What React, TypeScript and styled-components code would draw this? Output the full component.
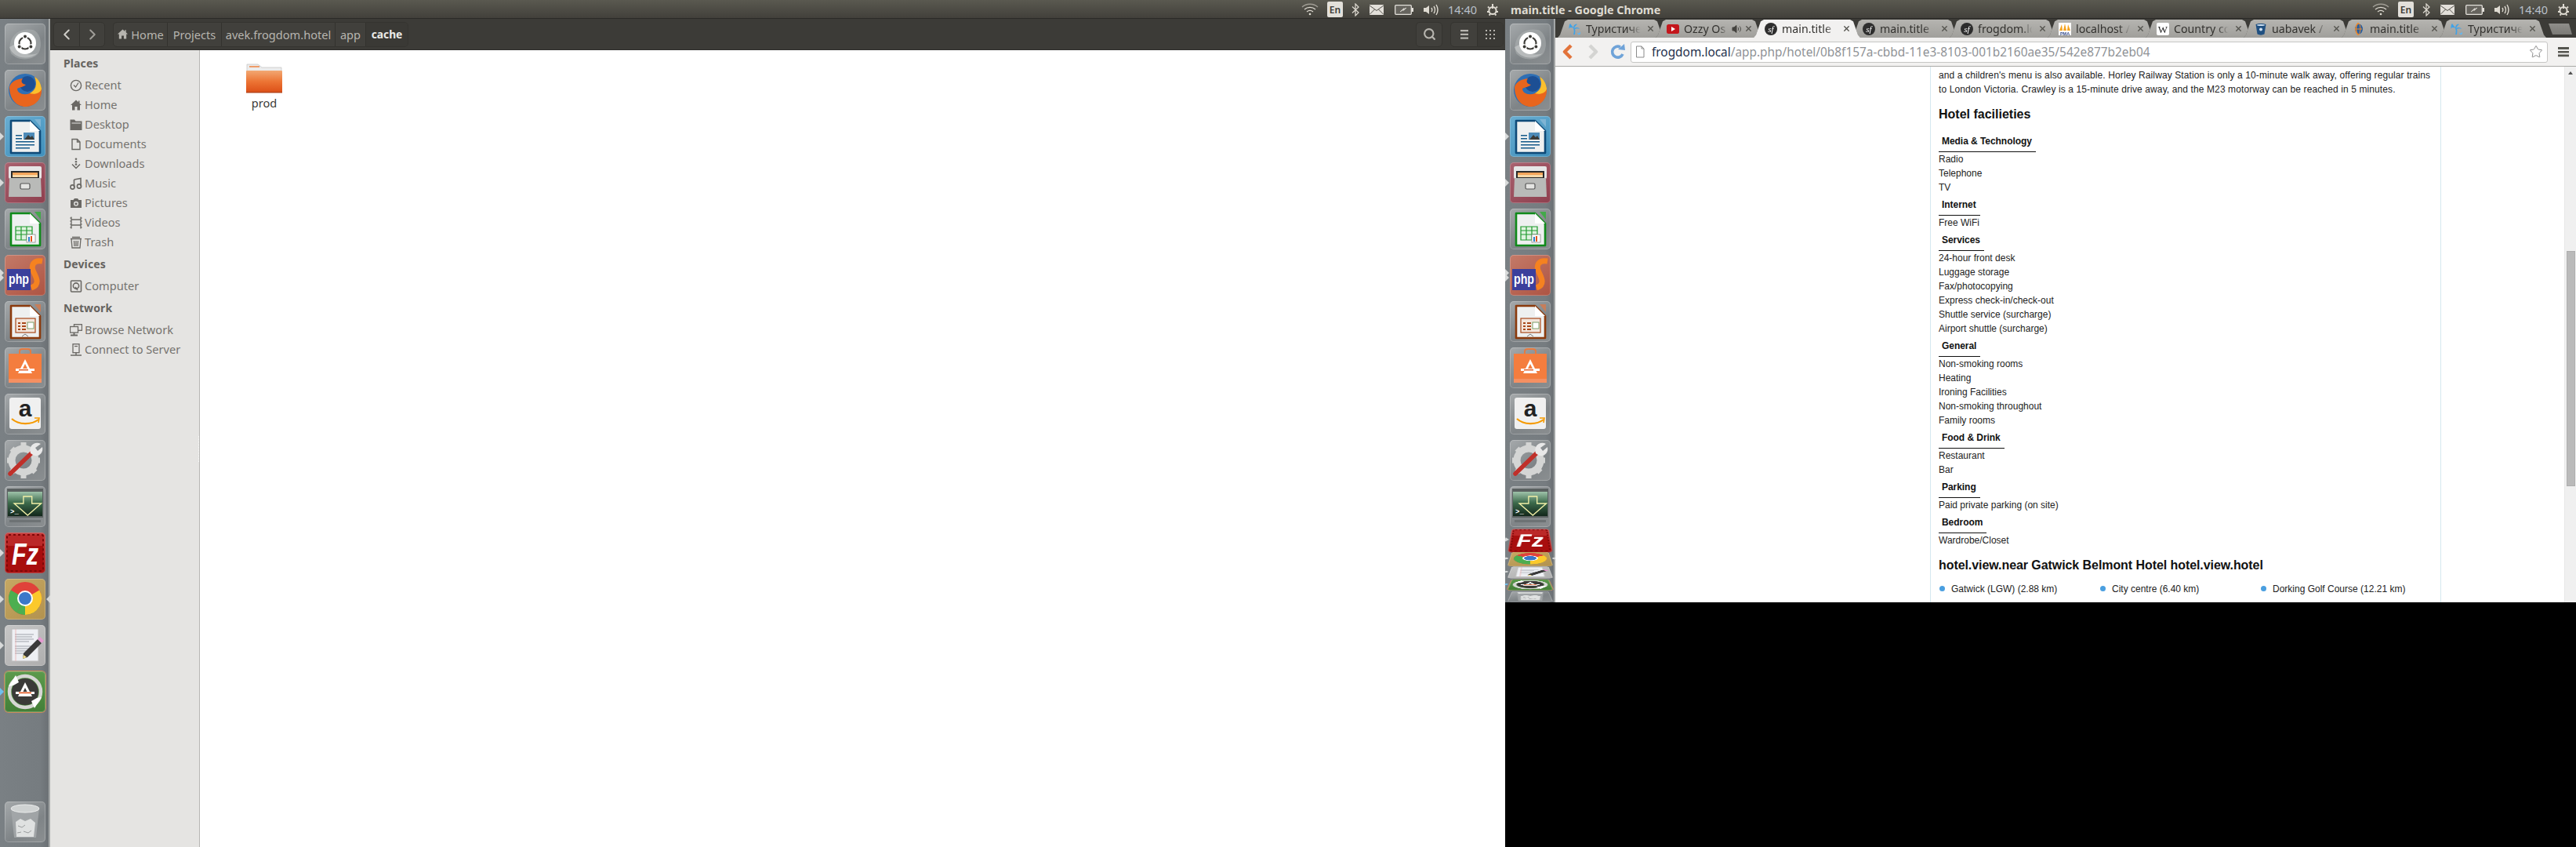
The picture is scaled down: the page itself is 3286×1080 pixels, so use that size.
import React from 'react'
import styled, { createGlobalStyle } from 'styled-components'
import { ChevronLeft, ChevronRight, Search, Star, X } from 'lucide-react'

const GlobalStyle = createGlobalStyle`
  html, body { margin: 0; padding: 0; background: #000; }
  body { width: 3286px; height: 1080px; overflow: hidden; font-family: "Noto Sans", "Open Sans", sans-serif; }
  * { box-sizing: border-box; }
`

const Desktop = styled.div`
  display: flex;
  width: 3286px;
  height: 1080px;
  background: #000;
`
const Screen = styled.div<{ $w: number; $h: number }>`
  display: flex;
  flex-direction: column;
  flex: none;
  width: ${p => p.$w}px;
  height: ${p => p.$h}px;
`
const Panel = styled.div`
  display: flex;
  align-items: center;
  flex: none;
  height: 24px;
  background: linear-gradient(#5a5950, #413f3a);
  box-shadow: inset 0 -1px 0 #2b2a27;
`
const WindowTitle = styled.div`
  margin-left: 7px;
  color: #dfdbd2;
  font-size: 14.3px;
  font-weight: 700;
  white-space: nowrap;
`
const IndicatorRow = styled.div`
  display: flex;
  align-items: center;
  margin-left: auto;
  padding-right: 2px;
  height: 24px;
`
const Indicator = styled.div<{ $w: number }>`
  display: flex;
  align-items: center;
  justify-content: center;
  width: ${p => p.$w}px;
  height: 24px;
  color: #dfdbd2;
`
const LangBox = styled.div`
  display: flex;
  align-items: center;
  justify-content: center;
  width: 20px;
  height: 20px;
  border-radius: 2px;
  background: #e3e0da;
  color: #3c3b37;
  font-size: 12px;
  font-weight: 600;
`
const Clock = styled.span`
  color: #b9c0c9;
  font-size: 14.5px;
`
const Body = styled.div`
  display: flex;
  flex: 1;
  min-height: 0;
`

/* launcher */
const Launcher = styled.div`
  display: flex;
  flex-direction: column;
  flex: none;
  width: 64px;
  padding: 6px 0;
  background: linear-gradient(90deg, #7a8084 0%, #767c80 80%, #6c7175 96%, #a3a6a6 97%, #a3a6a6 100%);
`
const TileList = styled.div`
  display: flex;
  flex-direction: column;
  gap: 7px;
  padding-left: 6px;
`
const FoldList = styled.div`
  display: flex;
  flex-direction: column;
  margin-top: 1px;
  padding-left: 6px;
`
const Fold = styled.div<{ $h: number; $deg: number }>`
  display: flex;
  align-items: center;
  height: ${p => p.$h}px;
  & > div {
    flex: none;
    transform: perspective(220px) rotateX(${p => p.$deg}deg);
  }
`
const BottomTile = styled.div`
  margin-top: auto;
  padding-left: 6px;
`
const Tile = styled.div<{ $bg?: string; $glow?: boolean }>`
  position: relative;
  width: 52px;
  height: 52px;
  border-radius: 5px;
  background: ${p => p.$bg || 'linear-gradient(145deg, #a5a9ab, #7f8487 60%, #8b8f91)'};
  box-shadow: inset 0 0 0 1px rgba(255, 255, 255, 0.22)${p => (p.$glow ? ', 0 0 0 1px #c98a5c' : '')};
  svg { display: block; }
`
const Pip = styled.span<{ $c: string; $y?: number }>`
  position: absolute;
  left: -6px;
  top: ${p => 21 + (p.$y || 0)}px;
  width: 0;
  height: 0;
  border-top: 5px solid transparent;
  border-bottom: 5px solid transparent;
  border-left: 5px solid ${p => p.$c};
`
const PipRight = styled.span`
  position: absolute;
  right: -6px;
  top: 21px;
  width: 0;
  height: 0;
  border-top: 5px solid transparent;
  border-bottom: 5px solid transparent;
  border-right: 5px solid #d4d6d6;
`

const AppIcon: React.FC<{ name: string }> = ({ name }) => {
  let art: React.ReactNode = null
  if (name === 'dash') {
    art = (
      <>
        <path d="M8 38 C2 20 16 4 36 8 C46 12 48 26 44 36 C40 46 18 50 8 38Z" fill="#b6babb" opacity=".45" />
        <path d="M6 30 C10 44 30 48 42 38 C30 42 18 38 14 26Z" fill="#d6d8d8" opacity=".5" />
        <circle cx="26" cy="25" r="14" fill="#fff" />
        <circle cx="26" cy="25" r="7.5" fill="none" stroke="#3c3b37" strokeWidth="2.2" />
        <circle cx="26" cy="16.5" r="2.6" fill="#3c3b37" stroke="#fff" strokeWidth="1.2" />
        <circle cx="18.6" cy="29.5" r="2.6" fill="#3c3b37" stroke="#fff" strokeWidth="1.2" />
        <circle cx="33.4" cy="29.5" r="2.6" fill="#3c3b37" stroke="#fff" strokeWidth="1.2" />
      </>
    )
  } else if (name === 'firefox') {
    art = (
      <>
        <circle cx="26" cy="26" r="21" fill="#2f6fb4" />
        <circle cx="29" cy="18" r="10" fill="#1d4f94" />
        <path d="M6 22 C6 38 16 48 28 47 C40 46 48 36 47 24 C45 16 41 11 38 9 C42 18 40 26 32 30 C24 33 16 30 16 24 C20 22 24 22 27 19 C22 18 20 15 23 11 C15 12 8 15 6 22Z" fill="#e8651d" />
        <path d="M38 9 C42 18 40 26 32 30 C38 32 46 30 47 24 C46 16 42 11 38 9Z" fill="#fbc02d" />
      </>
    )
  } else if (name === 'writer' || name === 'calc' || name === 'impress') {
    const c = name === 'writer' ? '#0f4a78' : name === 'calc' ? '#0f8a1a' : '#8b3a0c'
    const corner = name === 'writer' ? '#7fb4d4' : name === 'calc' ? '#43a94a' : '#c77e5a'
    art = (
      <>
        <path d="M38 4 H46 V14Z" fill={corner} />
        <path d="M8 6 H32 L45 19 V47 H8Z" fill="#eef0f0" stroke={c} strokeWidth="2.6" strokeLinejoin="round" />
        <path d="M32 6 L45 19 H32Z" fill="#fff" />
        {name === 'writer' && (
          <>
            <path d="M14 24h8v1.6h-8zM14 28h8v1.6h-8zM14 32h24v1.6H14zM14 36h24v1.6H14zM14 40h18v1.6H14z" fill="#155a8a" />
            <rect x="24" y="21" width="14" height="9" fill="#4d8bb8" />
            <path d="M25 30 l5-6 3 3 2-2 3 5z" fill="#3c3b37" />
          </>
        )}
        {name === 'calc' && (
          <>
            <path d="M14 23h21v17H14z" fill="#dff2df" stroke="#1f9a2c" strokeWidth="1.2" />
            <path d="M14 28h21M14 33h21M21 23v17M28 23v17" stroke="#1f9a2c" strokeWidth="1.2" />
            <rect x="28" y="33" width="11" height="10" fill="#fff" stroke="#888" strokeWidth=".8" />
            <path d="M30 36h2v6h-2z" fill="#2f7fc8" />
            <path d="M33 35h2v7h-2z" fill="#e2541c" />
          </>
        )}
        {name === 'impress' && (
          <>
            <rect x="14" y="22" width="25" height="18" fill="#f3e6dc" stroke="#a8481a" strokeWidth="1.2" />
            <path d="M17 27h3v2h-3zM17 31h3v2h-3zM17 35h3v2h-3zM22 27h5v2h-5zM22 31h5v2h-5zM22 35h5v2h-5z" fill="#a8481a" />
            <rect x="29" y="27" width="8" height="8" fill="#fff" stroke="#5c8a4a" strokeWidth=".8" />
            <path d="M22 45 l4-3 4 3" fill="none" stroke="#777" strokeWidth="1" />
          </>
        )}
      </>
    )
  } else if (name === 'files') {
    art = (
      <>
        <rect x="5" y="5" width="42" height="16" rx="2" fill="#e6e6e6" />
        <rect x="8" y="11" width="36" height="12" fill="#2a2a2a" />
        <rect x="10" y="13" width="32" height="3" fill="#f5a55a" />
        <rect x="10" y="16" width="32" height="3" fill="#f8d8a8" />
        <path d="M6 20 H46 L47 44 H5Z" fill="#b9bab8" />
        <rect x="20" y="27" width="12" height="7" rx="1.5" fill="#e4e4e2" stroke="#555" strokeWidth="1.2" />
      </>
    )
  } else if (name === 'php') {
    art = (
      <>
        <path d="M48 8 C36 6 33 14 37 22 C41 30 45 38 34 42" fill="none" stroke="#f58220" strokeWidth="7" />
        <rect x="3" y="18" width="30" height="27" fill="#3b3f9c" />
        <text x="5" y="37" fontFamily="Liberation Sans, sans-serif" fontWeight="700" fontSize="19" fill="#fff" textLength="26" lengthAdjust="spacingAndGlyphs">php</text>
      </>
    )
  } else if (name === 'software') {
    art = (
      <>
        <path d="M19 10 V5 Q19 2 23 2 H29 Q33 2 33 5 V10" fill="none" stroke="#e67a3f" strokeWidth="2" />
        <rect x="5" y="8" width="42" height="37" fill="#f47d3e" />
        <rect x="5" y="40" width="42" height="5" fill="#f59062" />
        <path d="M26 15 L35 33 H17Z" fill="#fff" />
        <path d="M26 21 L30 29 H22Z" fill="#f47d3e" />
        <rect x="14" y="27" width="24" height="3" fill="#fff" />
        <rect x="18" y="28" width="12" height="1.4" fill="#e2541c" />
      </>
    )
  } else if (name === 'amazon') {
    art = (
      <>
        <rect x="6" y="5" width="40" height="40" rx="3" fill="#f0f0f0" />
        <text x="26" y="29" textAnchor="middle" fontFamily="Liberation Sans, sans-serif" fontWeight="700" fontSize="30" fill="#222">a</text>
        <path d="M9 32 C18 40 34 40 43 33" fill="none" stroke="#f59a00" strokeWidth="2.2" />
        <path d="M38 31 L44 31 L43 37" fill="none" stroke="#f59a00" strokeWidth="1.6" />
      </>
    )
  } else if (name === 'settings') {
    art = (
      <>
        <circle cx="24" cy="26" r="15" fill="none" stroke="#d4d5d4" strokeWidth="9" />
        <path d="M24 3v8M24 41v8M3 26h8M37 26h8M9 11l6 6M33 35l6 6M39 11l-6 6M15 35l-6 6" stroke="#d4d5d4" strokeWidth="7" />
        <path d="M7 43 L36 15" stroke="#c0302a" strokeWidth="5.5" strokeLinecap="round" />
        <path d="M33 17 C30 8 38 1 46 5 L39 10 L42 14 L48 9 C50 17 42 23 36 19Z" fill="#e8e8e8" />
      </>
    )
  } else if (name === 'terminal') {
    art = (
      <>
        <rect x="3" y="3" width="46" height="37" fill="#5a6060" />
        <rect x="4" y="7" width="44" height="31" fill="url(#termGrad)" />
        <linearGradient id="termGrad" x1="0" y1="0" x2="0" y2="1">
          <stop offset="0" stopColor="#9fc3aa" />
          <stop offset=".45" stopColor="#3d6b4c" />
          <stop offset="1" stopColor="#12261a" />
        </linearGradient>
        <path d="M21 13 H33 V22 H46 L27 37 L8 22 H21Z" transform="translate(5 0) scale(.9 1)" fill="none" stroke="#f2f0a8" strokeWidth="1.5" />
        <text x="7" y="35" fontFamily="Liberation Mono, monospace" fontWeight="700" fontSize="9" fill="#fff">&gt;_</text>
        <rect x="6" y="43" width="40" height="3" fill="#6d7274" />
      </>
    )
  } else if (name === 'filezilla') {
    art = (
      <>
        <rect x="3" y="3" width="46" height="46" rx="2" fill="#a80e0e" />
        <rect x="3" y="3" width="46" height="14" fill="#c83a3a" opacity=".6" />
        <rect x="3" y="3" width="46" height="46" rx="2" fill="none" stroke="#7e0808" strokeWidth="2" strokeDasharray="3 3" />
        <text x="26" y="41" textAnchor="middle" fontFamily="Liberation Sans, sans-serif" fontStyle="italic" fontWeight="700" fontSize="38" fill="#fff" textLength="34" lengthAdjust="spacingAndGlyphs">Fz</text>
      </>
    )
  } else if (name === 'chrome') {
    art = (
      <>
        <circle cx="26" cy="25" r="21" fill="#e0423a" />
        <path d="M26 25 L44.2 35.5 A21 21 0 0 1 15.5 43.2 Z" fill="#4caf50" />
        <path d="M26 25 L15.5 43.2 A21 21 0 0 1 7.8 14.5 Z" fill="#4caf50" />
        <path d="M26 25 L26 46 A21 21 0 0 0 44.2 14.5 Z" fill="#fbc92b" />
        <circle cx="26" cy="25" r="10" fill="#fff" />
        <circle cx="26" cy="25" r="8" fill="#3b78c9" />
      </>
    )
  } else if (name === 'editor') {
    art = (
      <>
        <rect x="9" y="5" width="34" height="41" fill="#eef0f4" stroke="#bdbdbd" />
        <path d="M13 12h24M13 15h22M13 18h24M13 21h18M13 27h24M13 30h20M13 33h18M13 36h12" stroke="#9fa3ab" strokeWidth="1" />
        <path d="M14 5v41" stroke="#eab0b0" strokeWidth=".8" />
        <path d="M24 36 L42 18 L47 23 L29 41 L23 43Z" fill="#3a3a3a" />
        <path d="M42 18 L45 15 L50 20 L47 23Z" fill="#e49ad0" />
        <path d="M24 38 L23 43 L28 41Z" fill="#f3de8a" />
      </>
    )
  } else if (name === 'update') {
    art = (
      <>
        <circle cx="26" cy="26" r="20" fill="none" stroke="#d6d6d4" strokeWidth="4.5" />
        <circle cx="26" cy="26" r="17" fill="#3a3a38" />
        <path d="M26 14 L35 32 H17Z" fill="#fff" />
        <path d="M26 21 L29.5 28 H22.5Z" fill="#3a3a38" />
        <rect x="14" y="26" width="24" height="3" fill="#fff" />
        <rect x="18" y="26.6" width="16" height="1.6" fill="#e2541c" />
        <path d="M5 19 L14 5 L18 14 L11 18 Z" fill="#fff" />
        <path d="M47 33 L38 47 L34 38 L41 34 Z" fill="#fff" />
      </>
    )
  } else if (name === 'trash') {
    art = (
      <>
        <path d="M8 8 H44 L40 46 H12Z" fill="#a4a8aa" opacity=".85" />
        <ellipse cx="26" cy="9" rx="18" ry="5" fill="#cfd2d2" stroke="#eceded" />
        <path d="M14 26 l6-4 6 3 7-3 6 5 -2 18 h-22Z" fill="#dfe1e1" />
        <path d="M17 31l5 2 4-3M24 38l6 2 4-3M16 40l5-1" stroke="#9a9d9e" fill="none" />
      </>
    )
  }
  return (
    <svg width="52" height="52" viewBox="0 0 52 52">
      {art}
    </svg>
  )
}

const launcherApps: { name: string; bg?: string; pip?: string; pipTwo?: boolean; right?: boolean; glow?: boolean }[] = [
  { name: 'dash' },
  { name: 'firefox' },
  { name: 'writer', bg: 'linear-gradient(145deg, #6aaed2, #3f8fbb)', pip: '#d8dada' },
  { name: 'files', bg: 'linear-gradient(145deg, #a9626f, #8e3f4e)', pip: '#d8dada' },
  { name: 'calc' },
  { name: 'php', bg: 'linear-gradient(145deg, #c47a68, #ad5443)', pip: '#d8dada', pipTwo: true },
  { name: 'impress' },
  { name: 'software' },
  { name: 'amazon' },
  { name: 'settings' },
  { name: 'terminal' },
  { name: 'filezilla', bg: 'linear-gradient(#c23a3a, #a51010)', pip: '#d8dada' },
  { name: 'chrome', bg: 'linear-gradient(145deg, #c6a863, #b2924f)', pip: '#d8dada', right: true },
  { name: 'editor', bg: 'linear-gradient(145deg, #c6c6c6, #aeaeae)', pip: '#d8dada' },
  { name: 'update', bg: 'linear-gradient(#5c9a4c, #437f37)', pip: '#6fc0ee', glow: true },
]

const AppTile: React.FC<{ app: (typeof launcherApps)[number] }> = ({ app }) => (
  <Tile $bg={app.bg} $glow={app.glow}>
    {app.pip && <Pip $c={app.pip} $y={app.pipTwo ? -3 : 0} />}
    {app.pipTwo && <Pip $c={app.pip!} $y={3} />}
    {app.right && <PipRight />}
    <AppIcon name={app.name} />
  </Tile>
)

const folds = [
  { h: 29, deg: 55 },
  { h: 19, deg: 70 },
  { h: 16, deg: 73 },
  { h: 15, deg: 75 },
]

/* panel indicators */
const Indicators: React.FC = () => (
  <IndicatorRow>
    <Indicator $w={34}>
      <svg width="22" height="16" viewBox="0 0 22 16" fill="none" stroke="currentColor" strokeWidth="1.3">
        <path d="M1 5 C6 0 16 0 21 5" opacity=".55" />
        <path d="M4 8 C8 4.5 14 4.5 18 8" />
        <path d="M7 11 C9.5 9 12.5 9 15 11" />
        <circle cx="11" cy="14" r="1.3" fill="currentColor" stroke="none" />
      </svg>
    </Indicator>
    <Indicator $w={30}>
      <LangBox>En</LangBox>
    </Indicator>
    <Indicator $w={22}>
      <svg width="10" height="17" viewBox="0 0 10 17" fill="none" stroke="currentColor" strokeWidth="1.2">
        <path d="M1 4.5 L9 12 L5 16 V1 L9 5 L1 12.5" />
      </svg>
    </Indicator>
    <Indicator $w={32}>
      <svg width="18" height="13" viewBox="0 0 18 13">
        <rect width="18" height="13" fill="#e3e0da" />
        <path d="M0 1 L9 7.5 L18 1 M0 12.5 L6.5 6 M18 12.5 L11.5 6" fill="none" stroke="#55534d" strokeWidth="1" />
      </svg>
    </Indicator>
    <Indicator $w={37}>
      <svg width="24" height="13" viewBox="0 0 24 13">
        <rect x=".7" y=".7" width="20.6" height="11.6" rx="1" fill="#66645e" stroke="#e3e0da" strokeWidth="1.3" />
        <rect x="22" y="4" width="2" height="5" fill="#e3e0da" />
        <path d="M7 9 L12 6 L11 7.5 L15 4 L11 6 L12 4.5Z" fill="#e3e0da" stroke="#e3e0da" strokeWidth=".6" />
      </svg>
    </Indicator>
    <Indicator $w={32}>
      <svg width="20" height="17" viewBox="0 0 20 17" fill="none" stroke="currentColor" strokeWidth="1.4">
        <path d="M1 6 H4 L8 3 V14 L4 11 H1Z" fill="currentColor" stroke="none" />
        <path d="M11 6 C12 7.5 12 9.5 11 11" />
        <path d="M14 4 C16 7 16 10 14 13" />
        <path d="M17 2 C19.5 6 19.5 11 17 15" />
      </svg>
    </Indicator>
    <Indicator $w={49}>
      <Clock>14:40</Clock>
    </Indicator>
    <Indicator $w={28}>
      <svg width="16" height="17" viewBox="0 0 16 17" fill="none" stroke="currentColor" strokeWidth="2.6">
        <circle cx="8" cy="9.5" r="4.6" strokeWidth="2" />
        <path d="M8 1 V7" strokeWidth="2" />
        <path d="M2 4.5 L3.5 6 M14 4.5 L12.5 6 M1 11 H3 M13 11 H15 M3.5 15.5 L5 14 M12.5 15.5 L11 14" strokeWidth="1.8" />
      </svg>
    </Indicator>
  </IndicatorRow>
)

/* nautilus */
const FileWindow = styled.div`
  display: flex;
  flex-direction: column;
  flex: 1;
  min-width: 0;
`
const FileToolbar = styled.div`
  display: flex;
  align-items: center;
  flex: none;
  height: 40px;
  padding: 0 2px 0 4px;
  background: #3c3b37;
  border-bottom: 1px solid #2f2e2b;
`
const ButtonGroup = styled.div<{ $ml?: number }>`
  display: flex;
  height: 32px;
  margin-left: ${p => p.$ml || 0}px;
  border-radius: 5px;
  border: 1px solid #353430;
  background: #41403c;
  overflow: hidden;
`
const ToolButton = styled.div<{ $w: number; $dark?: boolean; $c?: string; $bold?: boolean }>`
  display: flex;
  align-items: center;
  justify-content: center;
  gap: 3px;
  width: ${p => p.$w}px;
  height: 100%;
  background: ${p => (p.$dark ? '#3a3935' : 'transparent')};
  color: ${p => p.$c || '#b7b5af'};
  font-size: ${p => (p.$bold ? 13.8 : 14.6)}px;
  font-weight: ${p => (p.$bold ? 700 : 400)};
  white-space: nowrap;
  & + & { border-left: 1px solid #33322e; }
`
const ToolSpacer = styled.div`
  flex: 1;
`
const FileBody = styled.div`
  display: flex;
  flex: 1;
  min-height: 0;
`
const Sidebar = styled.div`
  position: relative;
  flex: none;
  width: 191px;
  padding: 6px 0 0 17px;
  background: #e5e4e2;
  border-right: 1px solid #b7b6b4;
  &::after {
    content: '';
    position: absolute;
    right: 0;
    top: 492px;
    height: 33px;
    border-right: 1px dotted #fff;
  }
`
const SideHeading = styled.div`
  height: 22px;
  margin-bottom: 3.5px;
  line-height: 22px;
  color: #65635f;
  font-size: 14px;
  font-weight: 700;
  letter-spacing: 0.1px;
`
const SideRow = styled.div<{ $last?: boolean }>`
  display: flex;
  align-items: center;
  gap: 3px;
  height: 25px;
  margin-bottom: ${p => (p.$last ? 5.5 : 0)}px;
  padding-left: 8px;
  color: #75736f;
  font-size: 14.6px;
  svg { flex: none; color: #6a6864; transform: translateY(1px); }
`
const FileArea = styled.div`
  flex: 1;
  padding: 17px 0 0 32px;
  background: #fff;
`
const FolderItem = styled.div`
  display: flex;
  flex-direction: column;
  align-items: center;
  width: 100px;
`
const FolderLabel = styled.div`
  margin-top: 2px;
  color: #3c3b37;
  font-size: 14.6px;
  line-height: 20px;
`

const sideIcons: Record<string, React.ReactNode> = {
  recent: (
    <>
      <circle cx="8" cy="8" r="6.6" fill="none" stroke="currentColor" strokeWidth="1.4" />
      <path d="M5 7.5 L7.5 10 L11 4.5" fill="none" stroke="currentColor" strokeWidth="1.3" />
    </>
  ),
  home: <path d="M8 1.5 L1 8 H3 V14.5 H6.5 V10 H9.5 V14.5 H13 V8 H15 L12.5 5.7 V2.5 H11 V4.3Z" fill="currentColor" />,
  desktop: (
    <>
      <path d="M0.5 1.5 H6 L7.5 3.5 H15.5 V15 H0.5Z" fill="currentColor" />
      <path d="M2.5 5.5 H14 V6.5 H2.5Z" fill="#e5e4e2" />
    </>
  ),
  documents: <path d="M3 1.5 H9.5 L13 5 V14.5 H3Z M9.5 1.5 V5 H13" fill="none" stroke="currentColor" strokeWidth="1.4" />,
  downloads: (
    <>
      <circle cx="8" cy="1.8" r="1.3" fill="currentColor" />
      <circle cx="8" cy="5.2" r="1.3" fill="currentColor" />
      <circle cx="8" cy="8.6" r="1.3" fill="currentColor" />
      <path d="M3 8.5 L8 13.5 L13 8.5" fill="none" stroke="currentColor" strokeWidth="1.5" />
    </>
  ),
  music: (
    <>
      <path d="M5.5 3 L14 1.5 V11.5 M5.5 3 V13" fill="none" stroke="currentColor" strokeWidth="1.6" />
      <circle cx="3.5" cy="12.5" r="2.6" fill="none" stroke="currentColor" strokeWidth="1.6" />
      <circle cx="12" cy="11.5" r="2.6" fill="none" stroke="currentColor" strokeWidth="1.6" />
    </>
  ),
  pictures: (
    <>
      <path d="M1 4 H4.5 L6 2 H10 L11.5 4 H15 V14 H1Z" fill="currentColor" />
      <circle cx="8" cy="8.8" r="3" fill="#e5e4e2" />
      <circle cx="8" cy="8.8" r="1.6" fill="currentColor" />
    </>
  ),
  videos: <path d="M2 0.5 V15.5 M14 0.5 V15.5 M2 4 H14 M2 11 H14 M0.5 2 H2 M0.5 6 H2 M0.5 10 H2 M0.5 14 H2 M14 2 H15.5 M14 6 H15.5 M14 10 H15.5 M14 14 H15.5" fill="none" stroke="currentColor" strokeWidth="1.3" />,
  trash: <path d="M1 3.5 H15 M3 1.5 H13 M2 3.5 L3 15 H13 L14 3.5 M5.5 6 L6 13 M8 6 V13 M10.5 6 L10 13" fill="none" stroke="currentColor" strokeWidth="1.3" />,
  computer: (
    <>
      <rect x="1.5" y="1" width="13" height="14" rx="1" fill="none" stroke="currentColor" strokeWidth="1.6" />
      <circle cx="8" cy="7.5" r="3.6" fill="none" stroke="currentColor" strokeWidth="1.6" />
      <path d="M7 9 L10 13" stroke="currentColor" strokeWidth="1.6" />
    </>
  ),
  network: (
    <>
      <rect x="5.5" y="0.7" width="10" height="7.6" fill="none" stroke="currentColor" strokeWidth="1.3" />
      <rect x="0.5" y="3.5" width="10" height="7.6" fill="#e5e4e2" stroke="currentColor" strokeWidth="1.3" />
      <path d="M1 14.5 H10 M5.5 11 V14.5" stroke="currentColor" strokeWidth="1.8" />
    </>
  ),
  server: (
    <>
      <rect x="4" y="0.7" width="8" height="11" fill="none" stroke="currentColor" strokeWidth="1.3" />
      <path d="M6 3.5 H10" stroke="currentColor" strokeWidth="1.3" />
      <path d="M8 11.5 V14.5 M1 15 H15" stroke="currentColor" strokeWidth="1.5" />
    </>
  ),
}

const SideIcon: React.FC<{ name: string }> = ({ name }) => (
  <svg width="16" height="16" viewBox="0 0 16 16">
    {sideIcons[name]}
  </svg>
)

const places = [
  ['recent', 'Recent'],
  ['home', 'Home'],
  ['desktop', 'Desktop'],
  ['documents', 'Documents'],
  ['downloads', 'Downloads'],
  ['music', 'Music'],
  ['pictures', 'Pictures'],
  ['videos', 'Videos'],
  ['trash', 'Trash'],
]

/* chrome */
const ChromeWindow = styled.div`
  display: flex;
  flex-direction: column;
  flex: 1;
  min-width: 0;
`
const TabStrip = styled.div`
  display: flex;
  align-items: flex-end;
  flex: none;
  height: 24px;
  padding-left: 3px;
  background: #3c3b37;
`
const TabSlot = styled.div<{ $active?: boolean }>`
  position: relative;
  z-index: ${p => (p.$active ? 2 : 1)};
  flex: none;
  width: 136px;
  height: 23px;
  margin-right: -11px;
  filter: drop-shadow(0 0 0.6px rgba(60, 60, 58, 0.7));
`
const TabShape = styled.div<{ $active?: boolean }>`
  display: flex;
  align-items: center;
  height: 100%;
  padding-left: 14px;
  clip-path: polygon(0 100%, 3px 85%, 9px 10%, 13px 0, 123px 0, 127px 10%, 133px 85%, 136px 100%);
  background: ${p => (p.$active ? '#f2f1f0' : 'linear-gradient(#b5b4b0, #a09f9b)')};
`
const TabIconBox = styled.span`
  display: flex;
  flex: none;
  width: 16px;
  height: 16px;
`
const TabTitle = styled.span`
  flex: 1;
  min-width: 0;
  margin-left: 6px;
  overflow: hidden;
  white-space: nowrap;
  color: #33322f;
  font-size: 14.2px;
  -webkit-mask-image: linear-gradient(90deg, #000 78%, transparent 98%);
`
const TabClose = styled.span`
  display: flex;
  flex: none;
  margin: 0 12px 0 6px;
  color: #55544f;
`
const SpeakerMark = styled.span`
  display: flex;
  flex: none;
  color: #44433f;
  margin-left: 4px;
  margin-right: -3px;
`
const NewTab = styled.div`
  flex: none;
  width: 30px;
  height: 14px;
  margin: 0 0 4px 14px;
  clip-path: polygon(0 0, 26px 0, 30px 100%, 5px 100%);
  background: linear-gradient(#8f8e8a, #7b7a76);
`
const ChromeToolbar = styled.div`
  display: flex;
  align-items: center;
  flex: none;
  height: 37px;
  background: #f2f1f0;
  border-bottom: 1px solid #a9a9a7;
`
const NavSlot = styled.div<{ $w: number }>`
  display: flex;
  align-items: center;
  justify-content: center;
  flex: none;
  width: ${p => p.$w}px;
`
const Omnibox = styled.div`
  display: flex;
  align-items: center;
  flex: none;
  width: 1170px;
  height: 27px;
  padding: 0 5px 0 4px;
  background: #fff;
  border: 1px solid #c6c6c4;
  border-radius: 3px;
  font-size: 15.4px;
  white-space: nowrap;
`
const UrlHost = styled.span`
  margin-left: 8px;
  color: #23304d;
`
const UrlPath = styled.span`
  color: #8f9296;
`
const StarSlot = styled.span`
  display: flex;
  margin-left: auto;
  color: #808080;
`
const Viewport = styled.div`
  display: flex;
  flex: 1;
  min-height: 0;
`
const PageArea = styled.div`
  flex: 1;
  min-width: 0;
  overflow: hidden;
  background: #fff;
`
const PageColumn = styled.div`
  width: 652px;
  height: 100%;
  margin-left: 478px;
  padding: 2px 10px 0;
  border-left: 1px solid #d5e8ef;
  border-right: 1px solid #d5e8ef;
  color: #222;
  font-family: "Liberation Sans", Arial, sans-serif;
  font-size: 12px;
  line-height: 18px;
`
const Intro = styled.div`
  letter-spacing: 0.11px;
  white-space: nowrap;
`
const PageHeading = styled.h2<{ $tight?: boolean }>`
  margin: 14px 0 12px;
  color: #111;
  font-size: 16px;
  line-height: 18px;
  font-weight: 700;
  letter-spacing: ${p => (p.$tight ? '-0.07px' : 'normal')};
`
const FacilityTitle = styled.div`
  display: table;
  padding: 0 5px 0 4px;
  border-bottom: 1px solid #111;
  color: #111;
  font-weight: 700;
  font-size: 12px;
  line-height: 26px;
  letter-spacing: -0.05px;
`
const NearList = styled.div`
  display: grid;
  grid-template-columns: repeat(3, 205px);
`
const NearItem = styled.div`
  display: flex;
  align-items: center;
  gap: 8px;
  padding-left: 1px;
  &::before {
    content: '';
    width: 7px;
    height: 7px;
    margin-top: -2px;
    border-radius: 50%;
    background: #4a9fe0;
  }
`
const ScrollTrack = styled.div`
  position: relative;
  flex: none;
  width: 15px;
  background: #f0f0f0;
  border-left: 1px solid #e8e8e8;
`
const ScrollArrow = styled.span`
  position: absolute;
  left: 4px;
  top: 6px;
  width: 0;
  height: 0;
  border-left: 3.5px solid transparent;
  border-right: 3.5px solid transparent;
  border-bottom: 4px solid #505050;
`
const ScrollThumb = styled.div`
  position: absolute;
  left: 2px;
  top: 235px;
  width: 11px;
  height: 300px;
  background: #bababa;
  border: 1px solid #aeaeae;
`

const Sf: React.FC = () => (
  <svg width="16" height="16" viewBox="0 0 16 16">
    <circle cx="8" cy="8" r="8" fill="#2d2d2d" />
    <text x="8" y="11.5" textAnchor="middle" fontFamily="Liberation Serif, serif" fontStyle="italic" fontSize="11" fill="#fff">sf</text>
  </svg>
)
const Palm: React.FC = () => (
  <svg width="16" height="16" viewBox="0 0 16 16">
    <path d="M6 7 C3 5 1 6 0 8 C1 6 0 3 2 1 C3 3 5 4 6 7 C6 4 8 1 11 2 C9 3 8 5 7 7 C10 5 13 6 14 8 C12 7 10 7 8 8 C9 10 8 13 8 15 L6 15 C7 12 7 10 6 7Z" fill="#3fa2e8" />
    <path d="M11 12 C12 14 14 14 15 11 L15 14 C14 16 11 16 11 12Z" fill="#63b7ef" />
  </svg>
)
const Youtube: React.FC = () => (
  <svg width="16" height="16" viewBox="0 0 16 16">
    <rect y="2" width="16" height="12" rx="2.5" fill="#c4161c" />
    <path d="M6 5 L11 8 L6 11Z" fill="#fff" />
  </svg>
)
const Pma: React.FC = () => (
  <svg width="16" height="16" viewBox="0 0 16 16">
    <rect width="16" height="16" fill="#fff" />
    <path d="M1 10 L4 2 L5 10Z M6 10 L8 1 L10 10Z M11 10 L12 2 L15 10Z" fill="#f5a21c" />
    <text x="8" y="15.5" textAnchor="middle" fontFamily="Liberation Sans, sans-serif" fontWeight="700" fontSize="5.5" fill="#334a8a">PMA</text>
  </svg>
)
const Wiki: React.FC = () => (
  <svg width="16" height="16" viewBox="0 0 16 16">
    <rect width="16" height="16" rx="2" fill="#fff" />
    <text x="8" y="12.5" textAnchor="middle" fontFamily="Liberation Serif, serif" fontSize="13" fill="#222">W</text>
  </svg>
)
const Bucket: React.FC = () => (
  <svg width="16" height="16" viewBox="0 0 16 16">
    <path d="M1.5 2 C4 0.5 12 0.5 14.5 2 L12.5 14.5 C10 16 6 16 3.5 14.5Z" fill="#205081" />
    <ellipse cx="8" cy="3" rx="5" ry="1" fill="#cfe0f0" />
    <circle cx="8" cy="8.5" r="2" fill="#cfe0f0" />
  </svg>
)
const Eclipse: React.FC = () => (
  <svg width="16" height="16" viewBox="0 0 16 16">
    <ellipse cx="8" cy="8" rx="5" ry="6.5" fill="#2b5f9e" />
    <path d="M8 0 C3 3 3 13 8 16" fill="none" stroke="#ee8a2c" strokeWidth="1.6" />
    <path d="M8 1 C11 4 10 12 8 15 M3 8 H12" fill="none" stroke="#ee8a2c" strokeWidth="1" />
  </svg>
)

const tabs: { title: string; icon: React.ReactNode; active?: boolean; sound?: boolean }[] = [
  { title: 'Туристичес', icon: <Palm /> },
  { title: 'Ozzy Os', icon: <Youtube />, sound: true },
  { title: 'main.title', icon: <Sf />, active: true },
  { title: 'main.title', icon: <Sf /> },
  { title: 'frogdom.lo', icon: <Sf /> },
  { title: 'localhost /', icon: <Pma /> },
  { title: 'Country co', icon: <Wiki /> },
  { title: 'uabavek / v', icon: <Bucket /> },
  { title: 'main.title', icon: <Eclipse /> },
  { title: 'Туристичес', icon: <Palm /> },
]

const facilities: [string, string[]][] = [
  ['Media & Technology', ['Radio', 'Telephone', 'TV']],
  ['Internet', ['Free WiFi']],
  ['Services', ['24-hour front desk', 'Luggage storage', 'Fax/photocopying', 'Express check-in/check-out', 'Shuttle service (surcharge)', 'Airport shuttle (surcharge)']],
  ['General', ['Non-smoking rooms', 'Heating', 'Ironing Facilities', 'Non-smoking throughout', 'Family rooms']],
  ['Food & Drink', ['Restaurant', 'Bar']],
  ['Parking', ['Paid private parking (on site)']],
  ['Bedroom', ['Wardrobe/Closet']],
]

const App: React.FC = () => {
  return (
    <Desktop>
      <GlobalStyle />
      <Screen $w={1920} $h={1080}>
        <Panel>
          <Indicators />
        </Panel>
        <Body>
          <Launcher>
            <TileList>
              {launcherApps.map(app => (
                <AppTile key={app.name} app={app} />
              ))}
            </TileList>
            <BottomTile>
              <Tile>
                <AppIcon name="trash" />
              </Tile>
            </BottomTile>
          </Launcher>
          <FileWindow>
            <FileToolbar>
              <ButtonGroup>
                <ToolButton $w={32} $c="#cfcdc8">
                  <ChevronLeft size={22} strokeWidth={2.2} />
                </ToolButton>
                <ToolButton $w={32} $c="#a09e99">
                  <ChevronRight size={22} strokeWidth={2.2} />
                </ToolButton>
              </ButtonGroup>
              <ButtonGroup $ml={10}>
                <ToolButton $w={68}>
                  <svg width="15" height="15" viewBox="0 0 16 16">
                    {sideIcons.home}
                  </svg>
                  Home
                </ToolButton>
                <ToolButton $w={69}>Projects</ToolButton>
                <ToolButton $w={145}>avek.frogdom.hotel</ToolButton>
                <ToolButton $w={39}>app</ToolButton>
                <ToolButton $w={54} $c="#ecebe8" $bold $dark>
                  cache
                </ToolButton>
              </ButtonGroup>
              <ToolSpacer />
              <ButtonGroup>
                <ToolButton $w={32}>
                  <Search size={17} strokeWidth={3} />
                </ToolButton>
              </ButtonGroup>
              <ButtonGroup $ml={10}>
                <ToolButton $w={33}>
                  <svg width="12" height="12" viewBox="0 0 12 12">
                    <path d="M1 0h10v2.2H1zM1 4.8h10V7H1zM1 9.6h10v2.2H1z" fill="currentColor" />
                  </svg>
                </ToolButton>
                <ToolButton $w={33} $dark>
                  <svg width="12" height="12" viewBox="0 0 12 12">
                    <path d="M0 0h2v2H0zM5 0h2v2H5zM10 0h2v2h-2zM0 5h2v2H0zM5 5h2v2H5zM10 5h2v2h-2zM0 10h2v2H0zM5 10h2v2H5zM10 10h2v2h-2z" fill="currentColor" />
                  </svg>
                </ToolButton>
              </ButtonGroup>
            </FileToolbar>
            <FileBody>
              <Sidebar>
                <SideHeading>Places</SideHeading>
                {places.map(([icon, label], i) => (
                  <SideRow key={label} $last={i === places.length - 1}>
                    <SideIcon name={icon} />
                    {label}
                  </SideRow>
                ))}
                <SideHeading>Devices</SideHeading>
                <SideRow $last>
                  <SideIcon name="computer" />
                  Computer
                </SideRow>
                <SideHeading>Network</SideHeading>
                <SideRow>
                  <SideIcon name="network" />
                  Browse Network
                </SideRow>
                <SideRow>
                  <SideIcon name="server" />
                  Connect to Server
                </SideRow>
              </Sidebar>
              <FileArea>
                <FolderItem>
                  <svg width="46" height="38" viewBox="0 0 46 38">
                    <defs>
                      <linearGradient id="folderFront" x1="0" y1="0" x2="0" y2="1">
                        <stop offset="0" stopColor="#f2a873" />
                        <stop offset=".5" stopColor="#ec7434" />
                        <stop offset="1" stopColor="#dc4f17" />
                      </linearGradient>
                    </defs>
                    <path d="M1 1 H15 L20 5 H45 V12 H1Z" fill="#ececec" stroke="#c8c8c8" strokeWidth=".8" />
                    <rect x="4" y="3" width="13" height="2" fill="#ef9d6a" />
                    <rect x="0" y="9" width="46" height="28" rx="1" fill="url(#folderFront)" />
                    <rect x="0" y="36" width="46" height="1.5" fill="#b5451a" />
                  </svg>
                  <FolderLabel>prod</FolderLabel>
                </FolderItem>
              </FileArea>
            </FileBody>
          </FileWindow>
        </Body>
      </Screen>
      <Screen $w={1366} $h={768}>
        <Panel>
          <WindowTitle>main.title - Google Chrome</WindowTitle>
          <Indicators />
        </Panel>
        <Body>
          <Launcher>
            <TileList>
              {launcherApps.slice(0, 11).map(app => (
                <AppTile key={app.name} app={app} />
              ))}
            </TileList>
            <FoldList>
              {folds.map((f, i) => (
                <Fold key={i} $h={f.h} $deg={f.deg}>
                  <AppTile app={launcherApps[11 + i]} />
                </Fold>
              ))}
              <Fold $h={15} $deg={75}>
                <Tile>
                  <AppIcon name="trash" />
                </Tile>
              </Fold>
            </FoldList>
          </Launcher>
          <ChromeWindow>
            <TabStrip>
              {tabs.map((tab, i) => (
                <TabSlot key={i} $active={tab.active}>
                  <TabShape $active={tab.active}>
                    <TabIconBox>{tab.icon}</TabIconBox>
                    <TabTitle>{tab.title}</TabTitle>
                    {tab.sound && (
                      <SpeakerMark>
                        <svg width="13" height="12" viewBox="0 0 13 12" fill="none" stroke="currentColor" strokeWidth="1">
                          <path d="M1 4 H3 L6 1.5 V10.5 L3 8 H1Z" fill="currentColor" />
                          <path d="M8 4 C9 5.5 9 6.5 8 8 M10 2.5 C12 5 12 7 10 9.5" />
                        </svg>
                      </SpeakerMark>
                    )}
                    <TabClose>
                      <X size={11} strokeWidth={3} />
                    </TabClose>
                  </TabShape>
                </TabSlot>
              ))}
              <NewTab />
            </TabStrip>
            <ChromeToolbar>
              <NavSlot $w={32}>
                <svg width="14" height="20" viewBox="0 0 14 20" fill="none">
                  <path d="M11 2 L3 10 L11 18" stroke="#e2733a" strokeWidth="4.4" strokeLinejoin="round" />
                </svg>
              </NavSlot>
              <NavSlot $w={32}>
                <svg width="14" height="20" viewBox="0 0 14 20" fill="none">
                  <path d="M3 2 L11 10 L3 18" stroke="#d4d4d2" strokeWidth="4.4" strokeLinejoin="round" />
                </svg>
              </NavSlot>
              <NavSlot $w={32}>
                <svg width="20" height="20" viewBox="0 0 20 20" fill="none">
                  <path d="M16 13 A7 7 0 1 1 13 4" stroke="#6fa3d8" strokeWidth="3.6" />
                  <path d="M10 7 L19 8 L18 0Z" fill="#6fa3d8" />
                </svg>
              </NavSlot>
              <Omnibox>
                <svg width="14" height="16" viewBox="0 0 14 16" fill="#fff" stroke="#8b8b8b">
                  <path d="M2.5 1 H9 L12 4 V15 H2.5Z M9 1 V4 H12" />
                </svg>
                <UrlHost>frogdom.local</UrlHost>
                <UrlPath>/app.php/hotel/0b8f157a-cbbd-11e3-8103-001b2160ae35/542e877b2eb04</UrlPath>
                <StarSlot>
                  <Star size={18} strokeWidth={1.2} />
                </StarSlot>
              </Omnibox>
              <NavSlot $w={40}>
                <svg width="14" height="14" viewBox="0 0 14 14">
                  <path d="M0 1h14v3H0zM0 6h14v2.6H0zM0 10.5h14v2.8H0z" fill="#55554f" />
                </svg>
              </NavSlot>
            </ChromeToolbar>
            <Viewport>
              <PageArea>
                <PageColumn>
                  <Intro>
                    and a children's menu is also available. Horley Railway Station is only a 10-minute walk away, offering regular trains
                    <br />
                    to London Victoria. Crawley is a 15-minute drive away, and the M23 motorway can be reached in 5 minutes.
                  </Intro>
                  <PageHeading>Hotel facilieties</PageHeading>
                  {facilities.map(([title, items]) => (
                    <div key={title}>
                      <FacilityTitle>{title}</FacilityTitle>
                      {items.map(item => (
                        <div key={item}>{item}</div>
                      ))}
                    </div>
                  ))}
                  <PageHeading $tight>hotel.view.near Gatwick Belmont Hotel hotel.view.hotel</PageHeading>
                  <NearList>
                    <NearItem>Gatwick (LGW) (2.88 km)</NearItem>
                    <NearItem>City centre (6.40 km)</NearItem>
                    <NearItem>Dorking Golf Course (12.21 km)</NearItem>
                  </NearList>
                </PageColumn>
              </PageArea>
              <ScrollTrack>
                <ScrollArrow />
                <ScrollThumb />
              </ScrollTrack>
            </Viewport>
          </ChromeWindow>
        </Body>
      </Screen>
    </Desktop>
  )
}

export default App
